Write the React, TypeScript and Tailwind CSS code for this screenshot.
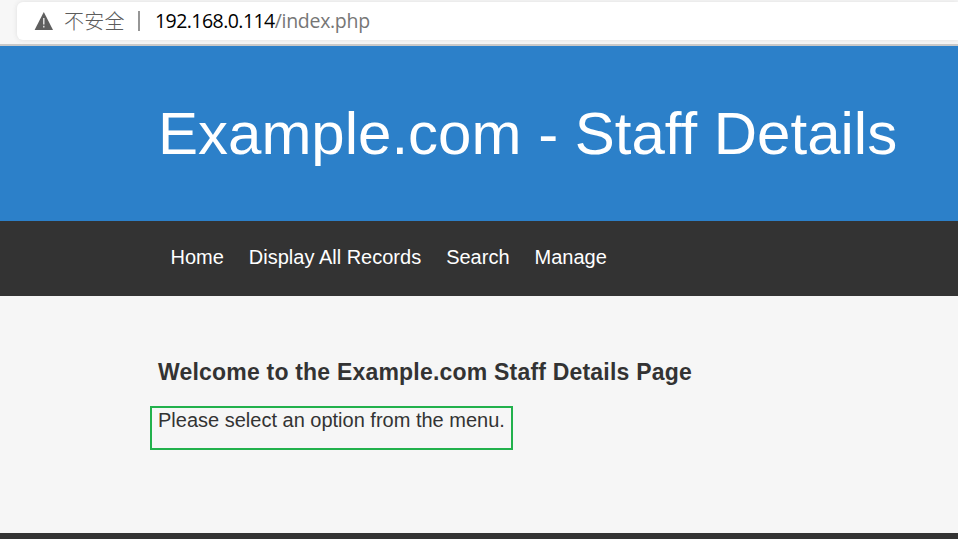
export default function App() {
  return (
    <div className="flex h-[539px] w-[958px] flex-col overflow-hidden bg-[#f6f6f6] font-['Liberation_Sans',Arial,sans-serif]">
      <div className="h-[46px] shrink-0 border-b-2 border-[#c9c9c9] bg-[#f7f7f7] pt-[2px] pl-[17px]">
        <div className="flex h-[38px] items-center rounded-l-md bg-white pl-[17px] shadow-[0_0_5px_#dedede]">
          <svg width="19" height="18" viewBox="0 0 19 18" className="mr-[11px] mb-px shrink-0">
            <path d="M9.8 0L19 18H0.6Z" fill="#5f5f5f" />
            <path d="M9.8 6v6.5M9.8 13.8v1.7" stroke="#e8e8e8" strokeWidth="1.4" />
          </svg>
          <span className="w-[60px] whitespace-nowrap font-['Noto_Sans_CJK_SC',sans-serif] text-[20px] font-light tracking-[0.3px] text-[#5c5c5c]">不安全</span>
          <span className="mr-[15px] ml-[14px] h-5 w-[2px] bg-[#969696]" />
          <span className="whitespace-nowrap font-['Open_Sans',sans-serif] text-[19.5px] tracking-[-0.3px] text-[#767676]"><span className="tracking-[-0.55px] text-black">192.168.0.114</span>/index.php</span>
        </div>
      </div>
      <header className="h-[175px] shrink-0 bg-[#2c80c9] pt-[53px] pl-[158px]">
        <h1 className="whitespace-nowrap text-[60px] leading-[70px] text-white">Example.com - Staff Details</h1>
      </header>
      <nav className="flex h-[75px] shrink-0 gap-[25px] bg-[#333] pt-[24px] pl-[170.5px] text-[20px] leading-6 text-white">
        <a>Home</a><a>Display All Records</a><a>Search</a><a>Manage</a>
      </nav>
      <main className="h-[237px] shrink-0 pt-[62px] pl-[150px] text-[#333]">
        <h2 className="pl-2 text-[23px] leading-7 font-bold tracking-[0.2px]">Welcome to the Example.com Staff Details Page</h2>
        <p className="mt-5 h-[44px] w-[363px] whitespace-nowrap border-2 border-[#22b14c] pl-[6px] text-[20px] leading-6">Please select an option from the menu.</p>
      </main>
      <footer className="h-[6px] shrink-0 bg-[#333]" />
    </div>
  );
}
